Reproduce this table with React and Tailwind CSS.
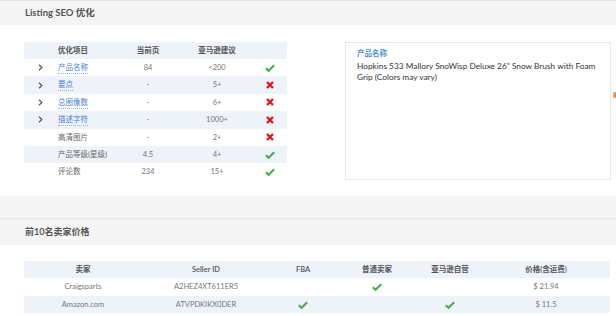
const seoRows = [
    { name: "产品名称", link: true, cur: "84", rec: "<200", ok: true },
    { name: "要点", link: true, cur: "-", rec: "5+", ok: false },
    { name: "总图像数", link: true, cur: "-", rec: "6+", ok: false },
    { name: "描述字符", link: true, cur: "-", rec: "1000+", ok: false },
    { name: "高清图片", link: false, cur: "-", rec: "2+", ok: false },
    { name: "产品等级(星级)", link: false, cur: "4.5", rec: "4+", ok: true },
    { name: "评论数", link: false, cur: "234", rec: "15+", ok: true },
];

const sellers = [
    { name: "Craigsparts", id: "A2HEZ4XT611ER5", fba: false, normal: true, amazon: false, price: "$ 21.94" },
    { name: "Amazon.com", id: "ATVPDKIKX0DER", fba: true, normal: false, amazon: true, price: "$ 11.5" },
];

const Check = () => (
    <svg width="10" height="8" viewBox="0 0 10 8" className="inline-block">
        <path d="M0.8 4.2 L3.6 6.8 L9.2 1.2" fill="none" stroke="#4cae4c" strokeWidth="2.2" />
    </svg>
);

const Cross = () => (
    <svg width="8" height="8" viewBox="0 0 8 8" className="inline-block">
        <path d="M1 1 L7 7 M7 1 L1 7" fill="none" stroke="#e8141a" strokeWidth="2.4" />
    </svg>
);

const Chevron = () => (
    <svg width="5" height="7" viewBox="0 0 5 7">
        <path d="M1 0.8 L3.8 3.5 L1 6.2" fill="none" stroke="#555" strokeWidth="1.2" />
    </svg>
);

export default function App() {
    return (
        <div
            className="relative w-[616px] h-[316px] overflow-hidden bg-white text-[#555]"
            style={{ fontFamily: 'Lato, "Noto Sans CJK SC", sans-serif' }}
        >
            {/* ── Listing SEO header ── */}
            <div className="h-[25px] bg-[#f4f4f4] border-t border-[#e4e4e4] flex items-center pl-[25px]">
                <span className="text-[9.5px] font-bold text-[#555]">Listing SEO 优化</span>
            </div>

            <div className="h-[171px] flex pt-[17px] pl-[24px]">
                {/* SEO table */}
                <div className="w-[263px] text-[7.5px]">
                    <div className="grid grid-cols-[32px_59px_66px_72px_34px] h-[17px] items-center bg-[#eef2f9] text-[#555] font-semibold">
                        <div />
                        <div className="pl-[2px]">优化项目</div>
                        <div className="text-center">当前页</div>
                        <div className="text-center">亚马逊建议</div>
                        <div />
                    </div>
                    {seoRows.map((r, i) => (
                        <div
                            key={r.name}
                            className={`grid grid-cols-[32px_59px_66px_72px_34px] h-[17.4px] items-center ${i % 2 === 1 ? "bg-[#eef2f9]" : "bg-white"}`}
                        >
                            <div className="flex justify-center">{r.link && <Chevron />}</div>
                            <div className="pl-[2px] whitespace-nowrap">
                                {r.link ? (
                                    <span className="text-[#4a7fd3] border-b border-dotted border-[#8fb2e6] pb-[1px]">{r.name}</span>
                                ) : (
                                    <span className="text-[#666]">{r.name}</span>
                                )}
                            </div>
                            <div className="text-center text-[#777]">{r.cur}</div>
                            <div className="text-center text-[#777]">{r.rec}</div>
                            <div className="flex justify-center">{r.ok ? <Check /> : <Cross />}</div>
                        </div>
                    ))}
                </div>

                {/* Product name card */}
                <div className="ml-[58px] w-[266px] h-[138px] border border-[#e8e8e8] pl-[11px] pr-[4px] pt-[5px]">
                    <div className="text-[7.5px] font-bold text-[#4a90e2] leading-[12px]">产品名称</div>
                    <div className="text-[8.3px] text-[#333] leading-[10.5px] mt-[1px]">
                        Hopkins 533 Mallory SnoWisp Deluxe 26" Snow Brush with Foam Grip (Colors may vary)
                    </div>
                </div>
            </div>

            {/* orange tab peeking at right edge */}
            <div className="absolute left-[613px] top-[92px] w-[6px] h-[6px] bg-[#f08a3c] border border-[#f5b07a]" />

            {/* ── gap band + seller header ── */}
            <div className="h-[23px] bg-[#f5f5f5] border-b border-[#e6e6e6]" />
            <div className="h-[26px] bg-[#f5f5f5] flex items-center pl-[25px]">
                <span className="text-[9px] font-bold text-[#555]">前10名卖家价格</span>
            </div>

            {/* Seller table */}
            <div className="pt-[16px] pl-[24px]">
                <div className="w-[586px] text-[7.5px]">
                    <div className="grid grid-cols-[118px_128px_66px_82px_64px_128px] h-[17px] items-center bg-[#eef2f9] font-semibold text-[#555] text-center">
                        <div>卖家</div>
                        <div>Seller ID</div>
                        <div>FBA</div>
                        <div>普通卖家</div>
                        <div>亚马逊自营</div>
                        <div>价格(含运费)</div>
                    </div>
                    {sellers.map((s, i) => (
                        <div
                            key={s.id}
                            className={`grid grid-cols-[118px_128px_66px_82px_64px_128px] h-[17.5px] items-center text-center text-[#777] ${i % 2 === 1 ? "bg-[#eef2f9]" : "bg-white"}`}
                        >
                            <div>{s.name}</div>
                            <div>{s.id}</div>
                            <div>{s.fba && <Check />}</div>
                            <div>{s.normal && <Check />}</div>
                            <div>{s.amazon && <Check />}</div>
                            <div>{s.price}</div>
                        </div>
                    ))}
                </div>
            </div>
        </div>
    );
}
